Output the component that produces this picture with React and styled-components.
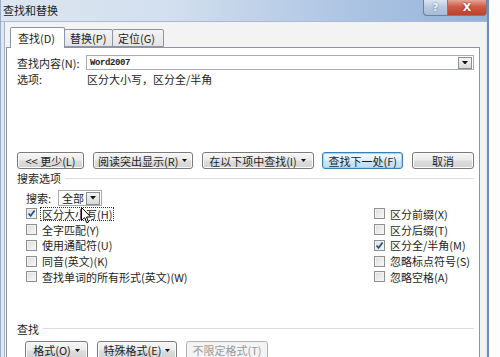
import React from "react";
import styled, { createGlobalStyle, css } from "styled-components";

const Global = createGlobalStyle`
  html, body { margin: 0; padding: 0; background: #ffffff; }
  body { font-family: "Noto Sans CJK SC", "Noto Sans", sans-serif; font-size: 11px; color: #1e1e1e; }
  * { box-sizing: border-box; }
`;

const Page = styled.div`
  width: 500px;
  height: 357px;
  overflow: hidden;
  background: #fdfdfd;
  display: flex;
`;

const Window = styled.div`
  width: 489px;
  height: 357px;
  display: flex;
  flex-direction: column;
  background: #dfe7f1;
  border-left: 1px solid #9aaec8;
  border-right: 2px solid #6f8db5;
  position: relative;
`;

const TitleBar = styled.div`
  height: 22px;
  flex: none;
  display: flex;
  align-items: flex-start;
  background: linear-gradient(to right, #dde6f1 0%, #d2dfee 35%, #b3c9e5 65%, #93b2da 100%);
  border-bottom: 1px solid #a9bbd2;
`;

const Title = styled.div`
  font-size: 11px;
  line-height: 20px;
  padding-left: 2px;
  color: #222;
  flex: 1;
`;

const CtrlButton = styled.div`
  height: 16px;
  display: flex;
  align-items: center;
  justify-content: center;
  font-family: "DejaVu Sans", sans-serif;
  font-weight: bold;
  color: #fff;
  border: 1px solid #6d7f99;
  border-top: none;
  ${(p) =>
    p.$close
      ? css`
          width: 40px;
          border-radius: 0 0 4px 0;
          background: linear-gradient(#e6a596, #cf5a43 45%, #c0402a);
          font-size: 11px;
          text-shadow: 0 0 2px #7a1a0a;
        `
      : css`
          width: 24px;
          border-right: none;
          border-radius: 0 0 0 4px;
          background: linear-gradient(#dce6f2, #b6c8df 50%, #a8bcd6);
          font-size: 10px;
          color: #f4f7fb;
          text-shadow: 0 0 2px #4d6180;
        `}
`;

const Client = styled.div`
  flex: 1;
  display: flex;
  flex-direction: column;
  background: #f3f3f3;
  margin: 0 1px 0 3px;
  border-left: 1px solid #aab4c2;
  padding-top: 5px;
  min-height: 0;
`;

const TabRow = styled.div`
  display: flex;
  align-items: flex-end;
  padding-left: 5px;
  height: 20px;
  flex: none;
  position: relative;
  z-index: 1;
`;

const Tab = styled.div`
  height: ${(p) => (p.$active ? 21 : 18)}px;
  width: ${(p) => p.$w}px;
  margin-bottom: ${(p) => (p.$active ? -1 : 0)}px;
  border: 1px solid #8c95a3;
  border-bottom: ${(p) => (p.$active ? "none" : "1px solid #8c95a3")};
  margin-left: ${(p) => (p.$first ? 0 : -1)}px;
  border-radius: 2px 2px 0 0;
  background: ${(p) => (p.$active ? "#ffffff" : "linear-gradient(#f4f4f4, #e4e4e4)")};
  display: flex;
  align-items: center;
  padding-left: ${(p) => (p.$active ? 7 : 5)}px;
  font-size: 11px;
  white-space: nowrap;
`;

const Panel = styled.div`
  flex: 1;
  background: #ffffff;
  border: 1px solid #8c95a3;
  border-bottom: none;
  margin: 0 6px 0 1px;
  padding: 7px 5px 0 10px;
  display: flex;
  flex-direction: column;
  position: relative;
`;

const FieldRow = styled.div`
  display: flex;
  align-items: center;
  height: ${(p) => p.$h || 15}px;
  margin-top: ${(p) => p.$mt || 0}px;
  padding-left: ${(p) => p.$pl || 0}px;
  white-space: nowrap;
`;

const Label = styled.span`
  width: ${(p) => p.$w}px;
  flex: none;
`;

const ComboBox = styled.div`
  flex: ${(p) => (p.$w ? "none" : 1)};
  width: ${(p) => (p.$w ? `${p.$w}px` : "auto")};
  height: ${(p) => p.$h || 15}px;
  border: 1px solid #a7abb3;
  background: #fff;
  display: flex;
  align-items: center;
  padding-left: 3px;
`;

const ComboText = styled.span`
  flex: 1;
  ${(p) =>
    p.$mono &&
    css`
      font-family: "Liberation Mono", monospace;
      font-size: 9px;
      font-weight: bold;
      letter-spacing: -0.4px;
    `}
`;

const DropBox = styled.div`
  width: 14px;
  height: ${(p) => p.$h || 12}px;
  margin-right: 1px;
  border: 1px solid #8a8f98;
  background: linear-gradient(#f4f4f4, #dadada);
  display: flex;
  align-items: center;
  justify-content: center;
`;

const Tri = ({ s = 6, c = "#111" }) => (
  <svg width={s} height={s * 0.6} viewBox="0 0 10 6">
    <path d="M0 0 H10 L5 6 Z" fill={c} />
  </svg>
);

const ButtonRow = styled.div`
  display: flex;
  justify-content: ${(p) => p.$justify || "flex-start"};
  gap: ${(p) => p.$gap || 0}px;
  margin-top: ${(p) => p.$mt || 0}px;
  padding-left: ${(p) => p.$pl || 0}px;
  flex: none;
`;

const Button = styled.div`
  width: ${(p) => p.$w}px;
  height: ${(p) => p.$h || 17}px;
  border: 1px solid #7a7a7a;
  border-radius: 3px;
  background: linear-gradient(#f6f6f6 0%, #ebebeb 48%, #dddddd 52%, #d2d2d2 100%);
  box-shadow: inset 0 0 0 1px #fbfbfb;
  display: flex;
  align-items: center;
  justify-content: center;
  gap: 4px;
  white-space: nowrap;
  font-size: 11px;
  ${(p) =>
    p.$focus &&
    css`
      border-color: #3c7fb1;
      background: linear-gradient(#f1f8fd 0%, #e3f0fa 48%, #cfe6f7 52%, #bcdcf3 100%);
      box-shadow: inset 0 0 0 1px #a6d3f0;
    `}
  ${(p) =>
    p.$disabled &&
    css`
      border-color: #adb2b5;
      background: #f4f4f4;
      color: #9a9a9a;
      box-shadow: none;
    `}
`;

const GroupHeader = styled.div`
  display: flex;
  align-items: center;
  gap: 4px;
  height: 14px;
  margin-top: ${(p) => p.$mt || 0}px;
  &::after {
    content: "";
    flex: 1;
    height: 1px;
    background: #dadde2;
  }
`;

const OptionGrid = styled.div`
  display: grid;
  grid-template-columns: 348px 1fr;
  grid-auto-rows: 15.75px;
  padding-left: 9px;
`;

const OptionCell = styled.div`
  display: flex;
  align-items: center;
  gap: 3px;
  white-space: nowrap;
  grid-column: ${(p) => p.$col};
`;

const Box = styled.span`
  width: 11px;
  height: 11px;
  flex: none;
  border: 1px solid #8e8f8f;
  background: linear-gradient(135deg, #dcdcdc, #f8f8f8);
  box-shadow: inset 0 0 0 1px #f2f2f2;
  display: flex;
  align-items: center;
  justify-content: center;
`;

const OptText = styled.span`
  padding: 0 1px;
  border: 1px dotted ${(p) => (p.$focus ? "#333" : "transparent")};
  line-height: 12px;
`;

const Cursor = styled.svg`
  position: absolute;
  left: 74px;
  top: 159px;
`;

const Check = () => (
  <svg width="9" height="9" viewBox="0 0 9 9">
    <path d="M1.5 4.5 L3.6 6.8 L7.6 1.5" fill="none" stroke="#1f4f9a" strokeWidth="1.7" />
  </svg>
);

const leftOpts = [
  ["区分大小写(H)", true, true],
  ["全字匹配(Y)", false],
  ["使用通配符(U)", false],
  ["同音(英文)(K)", false],
  ["查找单词的所有形式(英文)(W)", false],
];
const rightOpts = [
  ["区分前缀(X)", false],
  ["区分后缀(T)", false],
  ["区分全/半角(M)", true],
  ["忽略标点符号(S)", false],
  ["忽略空格(A)", false],
];

export default function App() {
  const cells = [];
  for (let i = 0; i < 5; i++) {
    const [lt, lc, lf] = leftOpts[i];
    const [rt, rc] = rightOpts[i];
    cells.push(
      <OptionCell key={"l" + i} $col={1}>
        <Box>{lc && <Check />}</Box>
        <OptText $focus={lf}>{lt}</OptText>
      </OptionCell>,
      <OptionCell key={"r" + i} $col={2}>
        <Box>{rc && <Check />}</Box>
        <OptText>{rt}</OptText>
      </OptionCell>
    );
  }
  return (
    <>
      <Global />
      <Page>
        <Window>
          <TitleBar>
            <Title>查找和替换</Title>
            <CtrlButton>?</CtrlButton>
            <CtrlButton $close>X</CtrlButton>
          </TitleBar>
          <Client>
            <TabRow>
              <Tab $active $first $w={55}>查找(D)</Tab>
              <Tab $w={49}>替换(P)</Tab>
              <Tab $w={52}>定位(G)</Tab>
            </TabRow>
            <Panel>
              <FieldRow>
                <Label $w={69}>查找内容(N):</Label>
                <ComboBox>
                  <ComboText $mono>Word2007</ComboText>
                  <DropBox>
                    <Tri />
                  </DropBox>
                </ComboBox>
              </FieldRow>
              <FieldRow $h={14} $mt={2}>
                <Label $w={70}>选项:</Label>
                <span>区分大小写，区分全/半角</span>
              </FieldRow>
              <ButtonRow $justify="space-between" $mt={66}>
                <Button $w={67}>&lt;&lt; 更少(L)</Button>
                <Button $w={100}>
                  阅读突出显示(R)<Tri s={5} />
                </Button>
                <Button $w={112}>
                  在以下项中查找(I)<Tri s={5} />
                </Button>
                <Button $w={81} $focus>
                  查找下一处(F)
                </Button>
                <Button $w={62}>取消</Button>
              </ButtonRow>
              <GroupHeader $mt={2}>搜索选项</GroupHeader>
              <FieldRow $h={16} $mt={5} $pl={9}>
                <Label $w={32}>搜索:</Label>
                <ComboBox $w={44} $h={16}>
                  <ComboText>全部</ComboText>
                  <DropBox $h={13}>
                    <Tri />
                  </DropBox>
                </ComboBox>
              </FieldRow>
              <OptionGrid>{cells}</OptionGrid>
              <GroupHeader $mt={37}>查找</GroupHeader>
              <ButtonRow $gap={9} $mt={5} $pl={8}>
                <Button $w={63} $h={19}>
                  格式(O)<Tri s={5} />
                </Button>
                <Button $w={80} $h={19}>
                  特殊格式(E)<Tri s={5} />
                </Button>
                <Button $w={82} $h={19} $disabled>
                  不限定格式(T)
                </Button>
              </ButtonRow>
              <Cursor width="11" height="17" viewBox="0 0 11 17">
                <path d="M0.5 0.5 L0.5 13.5 L3.6 10.6 L5.8 15.8 L7.6 15 L5.5 10 L9.8 10 Z" fill="#fff" stroke="#000" strokeWidth="1" />
              </Cursor>
            </Panel>
          </Client>
        </Window>
      </Page>
    </>
  );
}
